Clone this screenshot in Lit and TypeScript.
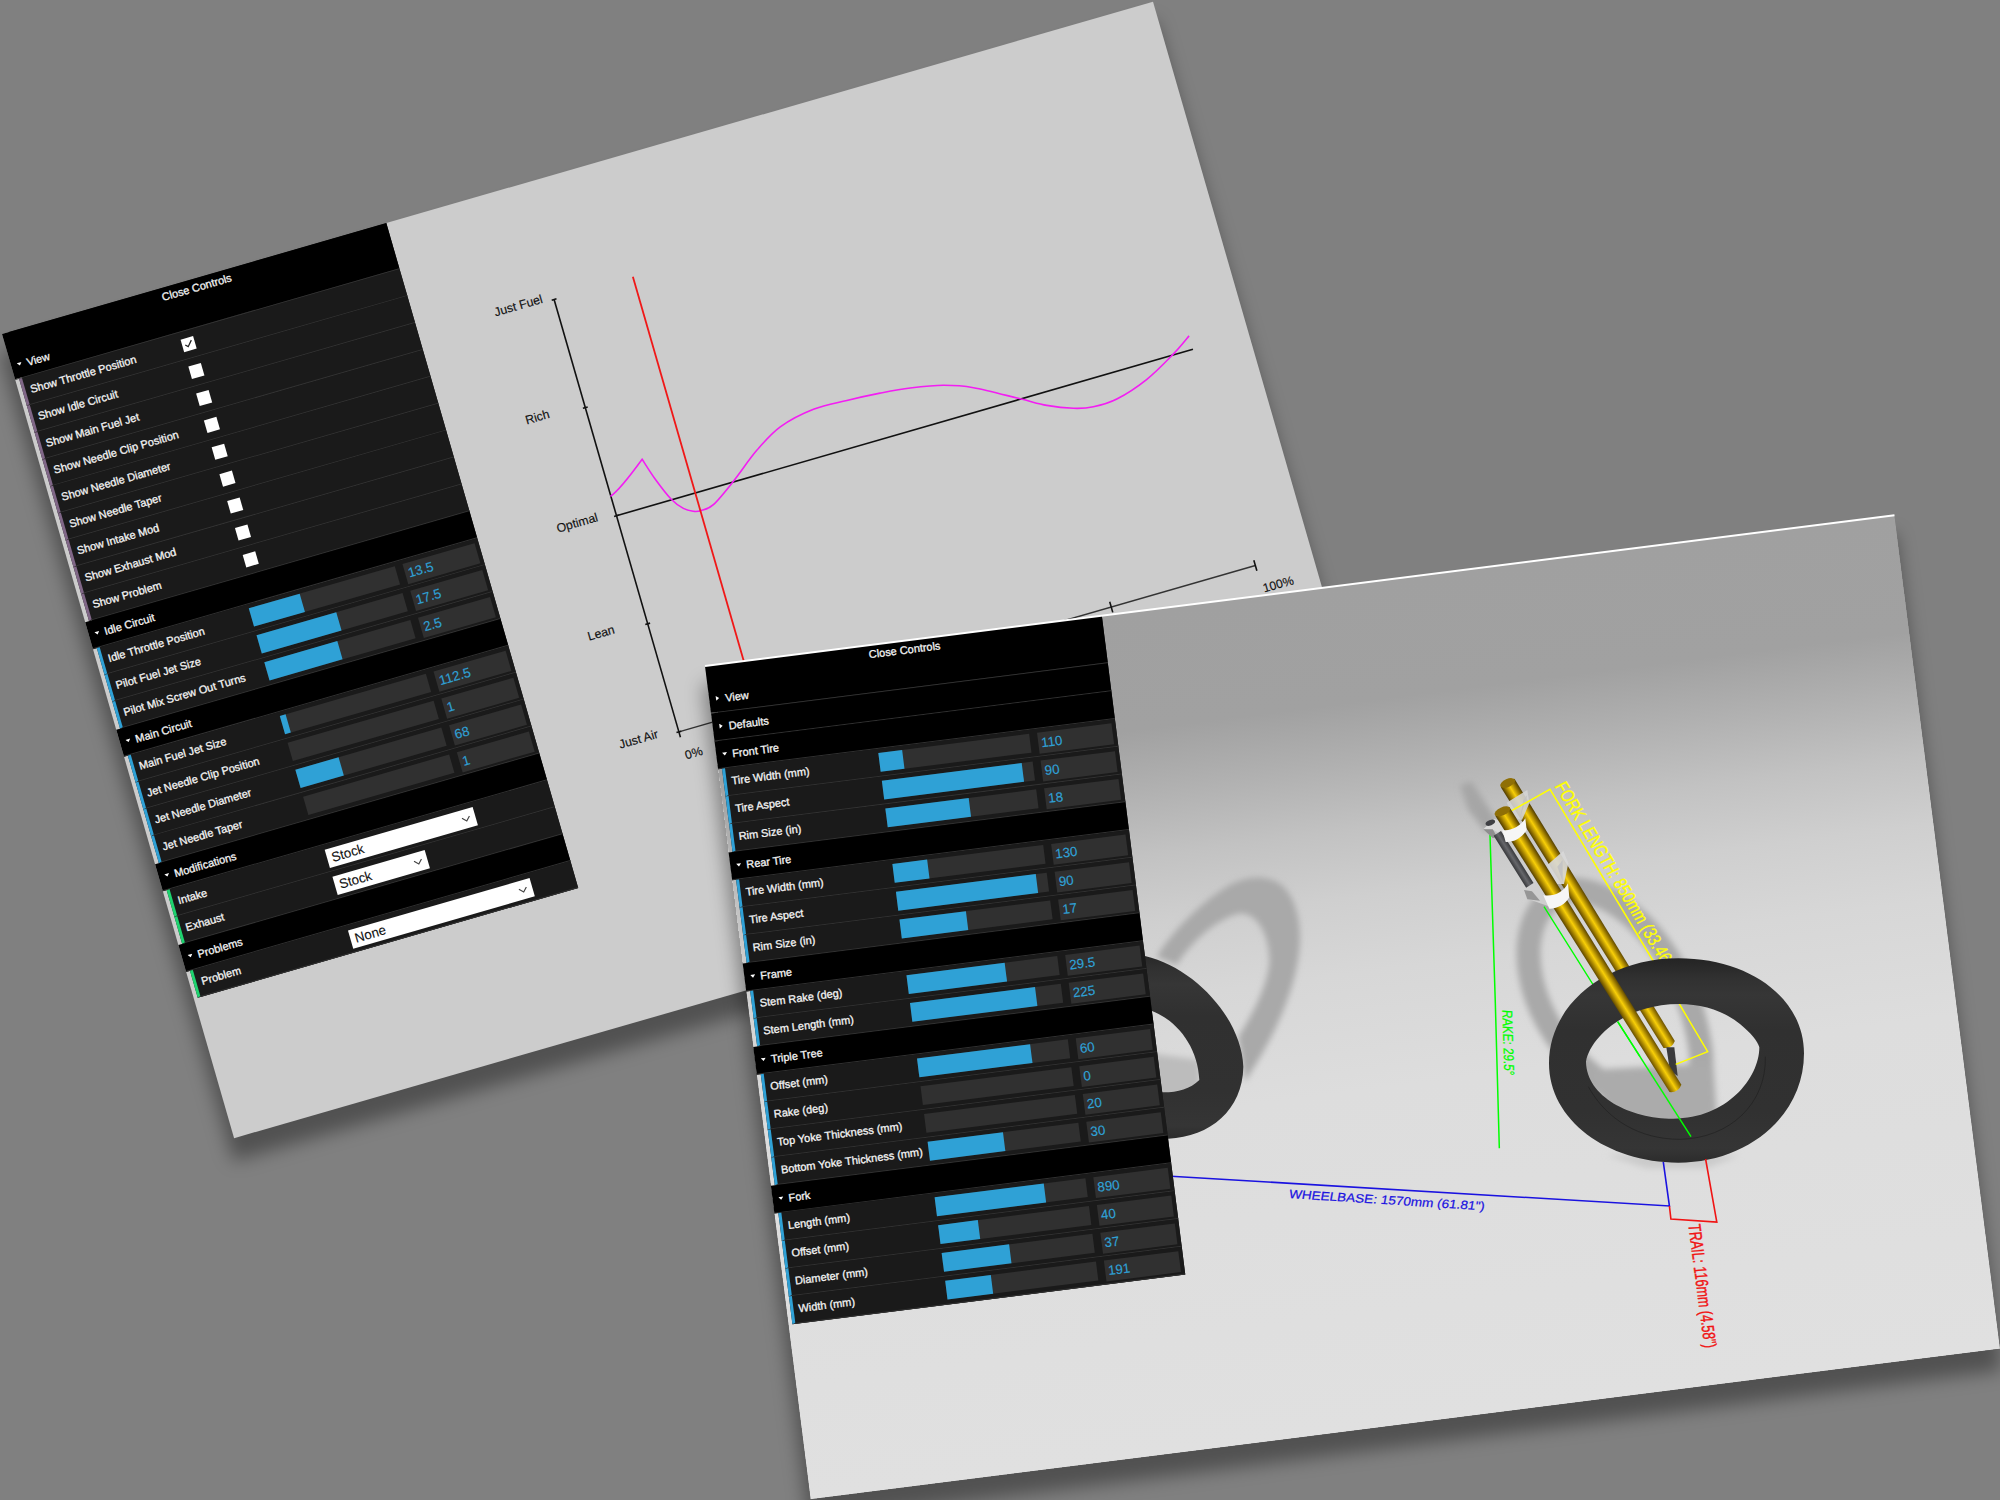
import { LitElement, html, svg, css, nothing } from "lit";
import { customElement, property } from "lit/decorators.js";
import { classMap } from "lit/directives/class-map.js";
import { styleMap } from "lit/directives/style-map.js";

type Row =
  | { kind: "check"; label: string; on: boolean }
  | { kind: "slider"; label: string; value: string; fill: number }
  | { kind: "select"; label: string; value: string; width: number };

interface Folder {
  title: string;
  open: boolean;
  rows: Row[];
}

const check = (label: string, on = false): Row => ({ kind: "check", label, on });
const slider = (label: string, value: string, fill: number): Row => ({ kind: "slider", label, value, fill });
const select = (label: string, value: string, width: number): Row => ({ kind: "select", label, value, width });

const CARB: Folder[] = [
  {
    title: "View",
    open: true,
    rows: [
      check("Show Throttle Position", true),
      check("Show Idle Circuit"),
      check("Show Main Fuel Jet"),
      check("Show Needle Clip Position"),
      check("Show Needle Diameter"),
      check("Show Needle Taper"),
      check("Show Intake Mod"),
      check("Show Exhaust Mod"),
      check("Show Problem"),
    ],
  },
  {
    title: "Idle Circuit",
    open: true,
    rows: [
      slider("Idle Throttle Position", "13.5", 35),
      slider("Pilot Fuel Jet Size", "17.5", 55),
      slider("Pilot Mix Screw Out Turns", "2.5", 50),
    ],
  },
  {
    title: "Main Circuit",
    open: true,
    rows: [
      slider("Main Fuel Jet Size", "112.5", 4),
      slider("Jet Needle Clip Position", "1", 0),
      slider("Jet Needle Diameter", "68", 30),
      slider("Jet Needle Taper", "1", 0),
    ],
  },
  {
    title: "Modifications",
    open: true,
    rows: [select("Intake", "Stock", 154), select("Exhaust", "Stock", 96)],
  },
  { title: "Problems", open: true, rows: [select("Problem", "None", 189.5)] },
];

const FORK: Folder[] = [
  { title: "View", open: false, rows: [] },
  { title: "Defaults", open: false, rows: [] },
  {
    title: "Front Tire",
    open: true,
    rows: [slider("Tire Width (mm)", "110", 16), slider("Tire Aspect", "90", 92.8), slider("Rim Size (in)", "18", 55.6)],
  },
  {
    title: "Rear Tire",
    open: true,
    rows: [slider("Tire Width (mm)", "130", 23.4), slider("Tire Aspect", "90", 92.8), slider("Rim Size (in)", "17", 44.2)],
  },
  {
    title: "Frame",
    open: true,
    rows: [slider("Stem Rake (deg)", "29.5", 65.4), slider("Stem Length (mm)", "225", 83)],
  },
  {
    title: "Triple Tree",
    open: true,
    rows: [
      slider("Offset (mm)", "60", 75),
      slider("Rake (deg)", "0", 0),
      slider("Top Yoke Thickness (mm)", "20", 0),
      slider("Bottom Yoke Thickness (mm)", "30", 50),
    ],
  },
  {
    title: "Fork",
    open: true,
    rows: [
      slider("Length (mm)", "890", 72.5),
      slider("Offset (mm)", "40", 26.3),
      slider("Diameter (mm)", "37", 45.3),
      slider("Width (mm)", "191", 30.4),
    ],
  },
];

@customElement("control-panel")
class ControlPanel extends LitElement {
  @property({ attribute: false }) folders: Folder[] = [];

  static styles = css`
    :host {
      display: block;
      width: 400px;
      font: 11px "Liberation Sans", Arial, sans-serif;
      color: #f4f4f4;
      -webkit-text-stroke: 0.3px currentColor;
      background: linear-gradient(#000, #000) 0 0 / 100% 47px no-repeat,
        linear-gradient(#1a1a1a, #1a1a1a) 7px 0 / 393px 100% no-repeat;
    }
    .close {
      height: 20px;
      line-height: 19px;
      text-align: center;
    }
    .title {
      display: flex;
      align-items: center;
      gap: 5px;
      height: 27px;
      padding-left: 6px;
      background: #000;
      border-bottom: 1px solid #323232;
    }
    .close + .title {
      background: none;
    }
    .arrow {
      width: 5px;
      height: 5px;
      fill: #fff;
    }
    .row {
      display: flex;
      height: 27px;
      margin-left: 4px;
      padding: 0 4px 0 5px;
      border-left: 3px solid #2fa1d6;
      border-bottom: 1px solid #323232;
      background: #1a1a1a;
    }
    .row.check {
      border-left-color: #806787;
    }
    .row.select {
      border-left-color: #1ed36f;
    }
    .label {
      flex: 0 0 40%;
      line-height: 27px;
      white-space: nowrap;
    }
    .control {
      flex: 1;
      display: flex;
      justify-content: space-between;
      align-items: flex-start;
    }
    .box {
      width: 13px;
      height: 13px;
      margin: 7px 0 0 4px;
      background: #fff;
    }
    .track {
      width: 66%;
      height: 19px;
      margin: 4px 0 0 -5px;
      background: #303030;
    }
    .fill {
      height: 100%;
      background: #2fa1d6;
    }
    .value {
      width: 30%;
      height: 15px;
      line-height: 15px;
      margin-top: 4px;
      padding: 3px;
      background: #303030;
      color: #2fa1d6;
      font-size: 13.33px;
      -webkit-text-stroke-width: 0.15px;
    }
    .drop {
      display: flex;
      align-items: center;
      justify-content: space-between;
      box-sizing: border-box;
      height: 19px;
      margin: 5px 0 0 1px;
      padding: 0 5px 0 5px;
      background: #fff;
      color: #111;
      font-size: 13.33px;
      -webkit-text-stroke-width: 0.1px;
    }
    .caret {
      width: 9px;
      height: 6px;
      fill: none;
      stroke: #444;
      stroke-width: 1.2;
    }
  `;

  private control(row: Row) {
    switch (row.kind) {
      case "check":
        return html`<svg class="box" viewBox="0 0 13 13">
          ${row.on ? svg`<path d="M3 6.4L5.4 8.8L10.2 3.4" fill="none" stroke="#222" stroke-width="1.3" />` : nothing}
        </svg>`;
      case "slider":
        return html`<div class="track"><div class="fill" style=${styleMap({ width: `${row.fill}%` })}></div></div>
          <div class="value">${row.value}</div>`;
      case "select":
        return html`<div class="drop" style=${styleMap({ width: `${row.width}px` })}>
          <span>${row.value}</span>
          <svg class="caret" viewBox="0 0 9 6"><path d="M0.6 0.8L4.5 4.8L8.4 0.8" /></svg>
        </div>`;
    }
  }

  render() {
    return html`
      <div class="close">Close Controls</div>
      ${this.folders.map(
        (f) => html`
          <div class="title">
            <svg class="arrow" viewBox="0 0 5 5"><path d=${f.open ? "M0 1.2H5L2.5 4.2Z" : "M0.8 0L4 2.5L0.8 5Z"} /></svg>
            <span>${f.title}</span>
          </div>
          ${f.rows.map(
            (r) => html`<div class=${classMap({ row: true, [r.kind]: true })}>
              <div class="label">${r.label}</div>
              <div class="control">${this.control(r)}</div>
            </div>`
          )}
        `
      )}
    `;
  }
}

const MIXTURE: [number, number][] = [
  [580.3, 297.9], [587.5, 321], [597, 344], [606.3, 356.5], [615, 362], [622.4, 363.5], [636.2, 361.2],
  [661.9, 344.3], [692.9, 321.1], [722, 305], [758.8, 297.3], [793.3, 298.1], [827.2, 300.3], [857.6, 303.8],
  [890.4, 310.4], [918.5, 321], [960.2, 344.6], [984, 358.3], [1008.8, 368.5], [1028.4, 372.6], [1053.1, 371.6],
  [1087.4, 361], [1120, 344], [1140, 331],
];

/** Catmull-Rom spline through the points, continuing the current path. */
function spline(pts: [number, number][]): string {
  let d = "";
  for (let i = 0; i < pts.length - 1; i++) {
    const p0 = pts[Math.max(i - 1, 0)];
    const p1 = pts[i];
    const p2 = pts[i + 1];
    const p3 = pts[Math.min(i + 2, pts.length - 1)];
    const c = [p1[0] + (p2[0] - p0[0]) / 6, p1[1] + (p2[1] - p0[1]) / 6, p2[0] - (p3[0] - p1[0]) / 6, p2[1] - (p3[1] - p1[1]) / 6];
    d += `C${c.map((n) => n.toFixed(1)).join(" ")} ${p2[0]} ${p2[1]}`;
  }
  return d;
}

@customElement("mixture-chart")
class MixtureChart extends LitElement {
  static styles = css`
    :host,
    .chart {
      display: block;
    }
    .axis {
      stroke: #111;
      stroke-width: 1.6;
    }
    .base {
      stroke: #333;
      stroke-width: 1.4;
    }
    .throttle {
      stroke: #f01818;
      stroke-width: 1.8;
    }
    .curve {
      fill: none;
      stroke: #f31df3;
      stroke-width: 1.6;
    }
    .text {
      font: 12.3px "Liberation Sans", Arial, sans-serif;
      fill: #111;
      stroke: #111;
      stroke-width: 0.15px;
    }
  `;

  render() {
    const ys = ["Just Fuel", "Rich", "Optimal", "Lean", "Just Air"];
    return html`<svg class="chart" width="1198" height="837" viewBox="0 0 1198 837">
      <line class="axis" x1="540" y1="120" x2="540" y2="570" />
      <line class="base" x1="540" y1="570" x2="1140" y2="570" />
      <line class="axis" x1="540" y1="345" x2="1140" y2="345" />
      ${ys.map((t, i) => svg`
        <line class="axis" x1="537.5" x2="542.5" y1=${120 + i * 112.5} y2=${120 + i * 112.5} />
        <text class="text" x="479" y=${120 + i * 112.5}>${t}</text>`)}
      ${[0, 1, 2, 3, 4].map((i) => svg`<line class="axis" x1=${540 + i * 150} x2=${540 + i * 150} y1=${i ? 564.5 : 570} y2="575.5" />`)}
      <text class="text" x="539.5" y="598.5">0%</text>
      <text class="text" x="1141" y="598.5">100%</text>
      <path class="curve" d="M539.5 324.8C548 322 566 309 580.3 297.9${spline(MIXTURE)}" />
      <line class="throttle" x1="622" y1="120" x2="622" y2="570" />
    </svg>`;
  }
}

@customElement("fork-scene")
class ForkScene extends LitElement {
  static styles = css`
    :host,
    .scene {
      display: block;
    }
    .t {
      font-family: "Liberation Sans", Arial, sans-serif;
    }
  `;

  private tube(x: number, y: number, angle: number, length: number, w0: number, w1: number) {
    return svg`<g transform="translate(${x} ${y}) rotate(${angle})">
      <path d="M${-w0} 0L${-w1} ${length}Q0 ${length + 16} ${w1} ${length}L${w0} 0Z" fill="url(#gold)" />
      <ellipse cx="0" cy="0" rx=${w0} ry="12" fill="#8f6f06" transform="rotate(8)" />
    </g>`;
  }

  render() {
    return html`<svg class="scene" width="1199" height="840" viewBox="0 0 1199 840">
      <defs>
        <linearGradient id="floor" x1="0" y1="0" x2="0" y2="1">
          <stop offset="0" stop-color="#a0a0a0" />
          <stop offset="0.14" stop-color="#a1a1a1" />
          <stop offset="0.21" stop-color="#b0b0b0" />
          <stop offset="0.29" stop-color="#c2c2c2" />
          <stop offset="0.37" stop-color="#cfcfcf" />
          <stop offset="0.46" stop-color="#d7d7d7" />
          <stop offset="0.6" stop-color="#dddddd" />
          <stop offset="1" stop-color="#e0e0e0" />
        </linearGradient>
        <linearGradient id="gold" x1="0" y1="0" x2="1" y2="0">
          <stop offset="0" stop-color="#4e3b00" />
          <stop offset="0.2" stop-color="#967500" />
          <stop offset="0.5" stop-color="#f8cf08" />
          <stop offset="0.8" stop-color="#967500" />
          <stop offset="1" stop-color="#4e3b00" />
        </linearGradient>
        <linearGradient id="steel" x1="0" y1="0" x2="1" y2="0">
          <stop offset="0" stop-color="#38393c" />
          <stop offset="0.5" stop-color="#66676b" />
          <stop offset="1" stop-color="#38393c" />
        </linearGradient>
        <linearGradient id="tire" x1="0" y1="0" x2="0" y2="1">
          <stop offset="0" stop-color="#242424" />
          <stop offset="0.1" stop-color="#313131" />
          <stop offset="0.18" stop-color="#363636" />
          <stop offset="0.35" stop-color="#303030" />
          <stop offset="0.75" stop-color="#313131" />
          <stop offset="0.93" stop-color="#353535" />
          <stop offset="1" stop-color="#2c2c2c" />
        </linearGradient>
        <filter id="soft" x="-30%" y="-30%" width="160%" height="160%"><feGaussianBlur stdDeviation="9" /></filter>
      </defs>
      <rect width="1199" height="840" fill="url(#floor)" />

      <g transform="rotate(7.22) translate(-705 -666)">
        <!-- rear wheel -->
        <g transform="translate(1130 840) scale(0.33333)">
          <path filter="url(#soft)" fill="#a9a9a9" d="M80 350C130 270 210 190 290 140C350 105 420 100 465 145C505 190 515 270 508 330C495 450 440 580 345 725L325 590C370 520 410 440 418 370C420 290 385 220 330 220C260 235 180 310 140 375Z" />
          <path filter="url(#soft)" fill="#bcbcbc" d="M60 640L210 660L210 770L60 770Z" />
          <path fill="url(#tire)" fill-rule="evenodd" d="M-60 330C-10 335 10 340 45 348C200 385 335 540 340 680C338 810 240 890 115 896C0 900 -100 860 -160 790ZM-20 500C10 498 30 500 64 512C140 540 204 620 208 720C180 748 140 758 95 757C40 755 0 740 -20 700Z" />
        </g>

        <!-- front wheel and fork -->
        <g transform="translate(1440 750) scale(0.33333)">
          <g filter="url(#soft)">
            <path fill="none" stroke="#a9a9a9" stroke-width="72" d="M266 590C275 470 350 405 430 422C580 450 745 640 782 900C800 1060 690 1100 600 1060C430 1000 255 800 266 590Z" />
            <path fill="#ababab" d="M440 960L820 940L830 1090L700 1150L520 1110Z" />
            <path fill="#a6a6a6" d="M60 105L95 95L170 210L140 250L85 180Z" />
            <path fill="#cacaca" d="M500 1215L900 1215L800 1255L620 1255Z" />
          </g>

          ${this.tube(203, 99, -31.7, 922, 24, 20)}
          <path d="M679 892L703 892L713 978L690 962Z" fill="#3a3a3c" />
          <path d="M200 158L262 120L268 160L246 210L225 205Z" fill="#d4d4d4" fill-opacity="0.9" />
          <path d="M250 150L262 135L240 205Z" fill="#c2c2c2" />
          <path d="M322 345L370 303L385 340L372 402L345 402Z" fill="#d8d8d8" fill-opacity="0.92" />
          <path d="M352 350L368 330L368 395Z" fill="#c4c4c4" />

          <g fill="none" stroke="#ffff00" stroke-width="4.5">
            <path d="M215 182L330 118L645 642" />
            <path d="M718 762L803 905L707 943" />
          </g>
          <text class="t" fill="#ffff00" stroke="#ffff00" stroke-width="1" font-size="56" textLength="654" lengthAdjust="spacingAndGlyphs"
            transform="matrix(0.515 0.857 -0.894 0.447 343 108)">FORK LENGTH: 850mm (33.46")</text>
          <path d="M312 470L463 710M533 815L600 920" fill="none" stroke="#00ff00" stroke-width="4" />

          <path fill="url(#tire)" fill-rule="evenodd" d="M327 940C327 762 500 625 715 625C930 625 1092 745 1092 910C1092 1100 920 1238 715 1238C500 1238 327 1110 327 940ZM438 935C448 875 520 805 610 778C720 745 830 765 900 822C934 850 952 872 958 892C958 985 860 1106 700 1106C570 1106 440 1040 438 935Z" />
          <path fill="none" stroke="#1f1f1f" stroke-width="2" d="M445 1010C500 1110 600 1168 720 1168C870 1165 980 1060 976 920" />

          <path d="M533 815L753 1160" fill="none" stroke="#00ff00" stroke-width="4.5" />
          <path d="M150 255L166 760L178 1195" fill="none" stroke="#00ff00" stroke-width="4.5" />

          <path d="M130 238L162 206L215 225L200 262L160 240Z" fill="#dadada" />
          <ellipse cx="151" cy="218" rx="15" ry="8" transform="rotate(-22 151 218)" fill="#3f4044" />
          <path d="M130 238L158 238L172 262L158 264Z" fill="#8e8e8e" />
          <g transform="translate(172 250) rotate(-32)"><rect x="-13" y="0" width="26" height="184" fill="url(#steel)" /></g>
          <path d="M252 422L290 400L335 430L330 470L262 446Z" fill="#cfcfcf" />
          <path d="M252 420L276 424L300 452L262 448Z" fill="#969696" />

          ${this.tube(187, 184, -32, 980, 25, 21)}
          <path d="M187 240C213 244 240 230 256 205L260 240C245 264 222 277 197 276Z" fill="#f6f6f6" />
          <path d="M310 436C345 440 370 426 384 400L388 442C375 464 352 477 328 476Z" fill="#f6f6f6" />

          <text class="t" fill="#00ff00" stroke="#00ff00" stroke-width="0.8" font-size="43" textLength="196" lengthAdjust="spacingAndGlyphs"
            transform="matrix(0.03 1 -1 -0.06 187 779)">RAKE: 29.5°</text>
        </g>

        <!-- ground measurements -->
        <g fill="none" stroke-width="1.6">
          <path stroke="#1a12e0" d="M1150 1175L1669.4 1206L1663.3 1162" />
          <path stroke="#f01414" d="M1705.6 1159L1716.8 1222.1L1670.9 1219L1669.4 1206" />
        </g>
        <text class="t" fill="#1a12e0" stroke="#1a12e0" stroke-width="0.2" font-size="12" textLength="196" lengthAdjust="spacingAndGlyphs"
          transform="matrix(0.998 0.063 -0.18 1 1288.5 1198)">WHEELBASE: 1570mm (61.81")</text>
        <text class="t" fill="#f01414" stroke="#f01414" stroke-width="0.4" font-size="17.5" textLength="125" lengthAdjust="spacingAndGlyphs"
          transform="matrix(0.13 0.991 -1 0.08 1688.3 1224.5)">TRAIL: 116mm (4.58")</text>
      </g>
    </svg>`;
  }
}

@customElement("app-root")
class AppRoot extends LitElement {
  static styles = css`
    :host {
      display: block;
      position: relative;
      width: 2000px;
      height: 1500px;
      overflow: hidden;
      background: #808080;
    }
    .window {
      position: absolute;
      transform-origin: 0 0;
    }
    .carb {
      left: 1.7px;
      top: 333.9px;
      width: 1198px;
      height: 837px;
      background: #ccc;
      transform: rotate(-16.1deg);
      box-shadow: -5px 20px 18px 2px rgba(0, 0, 0, 0.37);
    }
    .fork {
      left: 705px;
      top: 666px;
      width: 1199px;
      height: 840px;
      transform: rotate(-7.22deg);
      box-shadow: -3px 20px 18px 2px rgba(0, 0, 0, 0.37);
    }
    .fork::after {
      content: "";
      position: absolute;
      inset: -0.8px 0 auto 0;
      height: 1.3px;
      background: #fff;
    }
    .canvas,
    .panel {
      position: absolute;
      top: 0;
      left: 0;
    }
  `;

  render() {
    return html`
      <div class="window carb">
        <mixture-chart class="canvas"></mixture-chart>
        <control-panel class="panel" .folders=${CARB}></control-panel>
      </div>
      <div class="window fork">
        <fork-scene class="canvas"></fork-scene>
        <control-panel class="panel" .folders=${FORK}></control-panel>
      </div>
    `;
  }
}
